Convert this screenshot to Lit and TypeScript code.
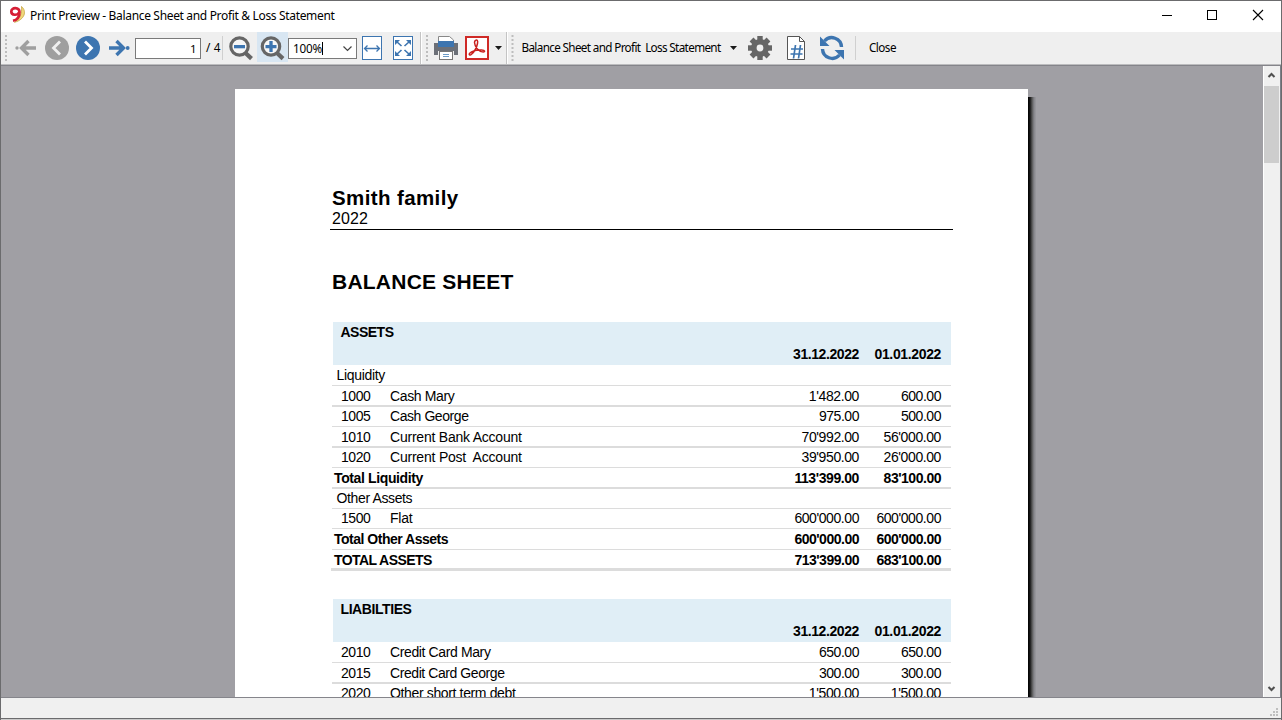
import { LitElement, html, svg, css } from "lit";
import { customElement, property } from "lit/decorators.js";

const SANS = '"Liberation Sans", Arial, sans-serif';
const UI = '"Noto Sans", "Open Sans", sans-serif';
const pen = document.createElement("canvas").getContext("2d")!;

/** Letter spacing that makes a text occupy the given advance width. */
function spacing(text: string, font: string, width: number): number {
  pen.font = font;
  return (width - pen.measureText(text).width) / text.length;
}

/** A single line of text that is set to a measured width. */
@customElement("set-text")
class SetText extends LitElement {
  @property() text = "";
  @property() face = "";
  @property({ type: Number }) w = 0;
  static styles = css`
    :host { display: block; white-space: pre; }
  `;
  render() {
    const s = this.w ? spacing(this.text, this.face, this.w) : 0;
    return html`<span style="font:${this.face};line-height:inherit;letter-spacing:${s.toFixed(3)}px">${this.text}</span>`;
  }
}

const REG = `14px ${SANS}`;
const BOLD = `bold 14px ${SANS}`;

type Row = {
  kind: "group" | "item" | "total";
  h: number;
  line: number;
  code?: string;
  name: string;
  w: number;
  a?: string;
  b?: string;
};

const assets: Row[] = [
  { kind: "group", h: 21, line: 1, name: "Liquidity", w: 48.5 },
  { kind: "item", h: 21, line: 2, code: "1000", name: "Cash Mary", w: 64.5, a: "1'482.00", b: "600.00" },
  { kind: "item", h: 20, line: 1, code: "1005", name: "Cash George", w: 78.5, a: "975.00", b: "500.00" },
  { kind: "item", h: 21, line: 2, code: "1010", name: "Current Bank Account", w: 132.5, a: "70'992.00", b: "56'000.00" },
  { kind: "item", h: 20, line: 1, code: "1020", name: "Current Post  Account", w: 132.5, a: "39'950.00", b: "26'000.00" },
  { kind: "total", h: 21, line: 2, name: "Total Liquidity", w: 89, a: "113'399.00", b: "83'100.00" },
  { kind: "group", h: 20, line: 1, name: "Other Assets", w: 76.5 },
  { kind: "item", h: 20, line: 1, code: "1500", name: "Flat", w: 22.5, a: "600'000.00", b: "600'000.00" },
  { kind: "total", h: 21, line: 1, name: "Total Other Assets", w: 114.5, a: "600'000.00", b: "600'000.00" },
  { kind: "total", h: 21, line: 3, name: "TOTAL ASSETS", w: 98.5, a: "713'399.00", b: "683'100.00" },
];

const liabilities: Row[] = [
  { kind: "item", h: 21, line: 1, code: "2010", name: "Credit Card Mary", w: 100.5, a: "650.00", b: "650.00" },
  { kind: "item", h: 21, line: 2, code: "2015", name: "Credit Card George", w: 114.5, a: "300.00", b: "300.00" },
  { kind: "item", h: 20, line: 1, code: "2020", name: "Other short term debt", w: 125.5, a: "1'500.00", b: "1'500.00" },
];

/** Width of an amount column entry; digits sit on a slightly tightened pitch. */
function amountWidth(t: string): number {
  const digits = t.replace(/\D/g, "").length;
  return digits * 7.2 + (t.includes("'") ? 3 : 0) + 4;
}

@customElement("report-table")
class ReportTable extends LitElement {
  @property() heading = "";
  @property({ type: Number }) hw = 0;
  @property({ attribute: false }) rows: Row[] = [];
  static styles = css`
    :host { display: block; width: 620px; line-height: 16px; color: #000; }
    .head { margin-left: 2px; height: 43px; box-sizing: border-box; background: #e0eef6; padding: 2px 0 3px 7.5px; display: flex; flex-direction: column; justify-content: space-between; }
    .dates, .row { display: grid; }
    .dates { grid-template-columns: 1fr 66px 82px 10px; justify-items: end; }
    .row { box-sizing: border-box; grid-template-columns: 58px 1fr 100px 82px 10px; align-items: end; border-bottom: 0 solid #dcdcdc; margin-left: 1px; }
    .l1 { border-bottom-width: 1px; padding-bottom: 2px; }
    .l2 { border-bottom-width: 2px; padding-bottom: 1px; }
    .l3 { border-bottom-width: 3px; margin-left: 0; padding-left: 1px; }
    .code { padding-left: 9px; }
    .group .name { grid-column: 1 / 3; padding-left: 4.5px; }
    .total .name { grid-column: 1 / 3; padding-left: 2px; }
    .num { justify-self: end; }
  `;
  render() {
    return html`
      <div class="head">
        <set-text text=${this.heading} face=${BOLD} w=${this.hw}></set-text>
        <div class="dates">
          <span></span>
          <set-text text="31.12.2022" face=${BOLD} w="66"></set-text>
          <set-text text="01.01.2022" face=${BOLD} w="66.5"></set-text>
        </div>
      </div>
      ${this.rows.map((r) => {
        const face = r.kind === "total" ? BOLD : REG;
        return html`<div class="row ${r.kind} l${r.line}" style="height:${r.h}px">
          ${r.code ? html`<set-text class="code" text=${r.code} face=${REG} w="29.4"></set-text>` : ""}
          <set-text class="name" text=${r.name} face=${face} w=${r.w}></set-text>
          ${r.a ? html`<set-text class="num" text=${r.a} face=${face} w=${amountWidth(r.a)}></set-text>
            <set-text class="num" text=${r.b!} face=${face} w=${amountWidth(r.b!)}></set-text>` : ""}
        </div>`;
      })}
    `;
  }
}

/** Toolbar cell; the drawing uses window x coordinates from x to x+w. */
const cell = (x: number, w: number, art: unknown) =>
  html`<svg class="cell" width=${w} height="32" viewBox="${x} 32 ${w} 32">${art}</svg>`;

const grip = (x: number) => svg`${[36, 40, 44, 48, 52, 56, 60].map(
  (y) => svg`<rect x=${x} y=${y - 1} width="2" height="2" fill="#bdbdbd"/>`)}`;
const bar = (x: number) => svg`<rect x=${x} y="36" width="1" height="24" fill="#d0d0d0"/>`;
const edge = (x: number) => svg`<rect x=${x} y="32" width="1" height="32" fill="#c4c4c4"/><rect x=${x + 1} y="32" width="1" height="32" fill="#fff"/>`;
const caret = (x: number) => svg`<path d="M${x} 46h7l-3.5 4z" fill="#1a1a1a"/>`;
const lens = (cx: number) => svg`<circle cx=${cx} cy="46.5" r="8.7" fill="#f7f7f7" stroke="#666" stroke-width="3.2"/><path d="M${cx + 6} 53l6 5.600" stroke="#666" stroke-width="4.200"/>`;
const teeth = [0, 45, 90, 135, 180, 225, 270, 315];

@customElement("app-root")
class AppRoot extends LitElement {
  static styles = css`
    :host { display: block; width: 1282px; height: 720px; overflow: hidden; background: #fff; color: #000; }
    .window { box-sizing: border-box; width: 1282px; height: 720px; border: 1px solid #6b6b6d; border-bottom: 0; display: flex; flex-direction: column; }
    .title { height: 31px; flex: none; display: flex; background: #fff; }
    .title set-text { line-height: 18px; padding-top: 5px; flex: 1; }
    .tools { height: 32px; flex: none; display: flex; background: #efefef; }
    .cell { display: block; flex: none; }
    .field { box-sizing: border-box; height: 21px; margin-top: 6px; border: 1px solid #7a7a7a; background: #fff; line-height: 18px; display: flex; flex: none; }
    .page-no { width: 66px; justify-content: flex-end; padding-right: 4px; }
    .zoom { width: 69px; padding-left: 4px; }
    .zoom svg { margin-left: auto; }
    .cursor { width: 1px; height: 13px; margin-top: 3px; background: #000; }
    .label { line-height: 20px; margin-top: 5px; flex: none; }
    .of { width: 20px; box-sizing: border-box; padding-left: 5px; }
    .name { width: 205px; box-sizing: border-box; padding-left: 2.5px; }
    .close { padding-left: 11px; }
    .rule { height: 2px; flex: none; box-sizing: border-box; border-top: 1px solid #bcbcbe; background: #84848a; }
    .view { height: 631px; flex: none; display: flex; background: #a09fa4; overflow: hidden; }
    .desk { flex: 1; box-sizing: border-box; padding: 23px 0 0 234px; display: flex; overflow: hidden; }
    .sheet { box-sizing: border-box; width: 793px; height: 900px; flex: none; background: #fff; padding: 97px 0 0 95px; }
    .shade { width: 8px; height: 900px; flex: none; margin-top: 8px; background: linear-gradient(90deg, #000 0, #161616 25%, #555 50%, #85858a 75%, #9b9a9f 100%); }
    .family { line-height: 24px; padding-left: 2px; }
    .year { line-height: 18px; padding-left: 2px; margin-top: -2px; }
    .under { width: 623px; height: 1px; background: #000; margin-top: 1px; }
    .doc { line-height: 24px; padding: 40px 0 0 2px; }
    .one { margin: 26px 0 0 1px; }
    .two { margin: 28px 0 0 1px; }
    .scroll { width: 16px; background: #f0f0f0; border-left: 1px solid #fff; border-right: 1px solid #7d8089; flex: none; display: flex; flex-direction: column; }
    .thumb { width: 15px; height: 77px; background: #cdcdcd; }
    .room { flex: 1; }
    .status { height: 20px; flex: none; border-top: 1px solid #85858b; background: #f0f0f0; display: flex; justify-content: flex-end; }
    .foot { height: 1px; flex: none; background: #6b6b6d; }
    .below { height: 1px; flex: none; background: #c9c9c9; }
  `;

  render() {
    const ui = (px: number) => `${px}px ${UI}`;
    return html`
      <div class="window">
        <div class="title">
          <svg class="cell" width="29" height="31" viewBox="1 1 29 31">
            <path d="M21.500 6.500c5.500 4.500 3.500 13-7 15.800 5-3.500 8-9 7-15.800z" fill="#f0d87a" stroke="#c9a94b" stroke-width=".9"/>
            <path d="M19 12.500c-1.500 3-7.700 3.300-7.700-1 0-4.500 8-4.600 8.200.600.100 4.500-2.500 7.800-6.500 8.700" fill="none" stroke="#d51f35" stroke-width="2.700"/>
          </svg>
          <set-text text="Print Preview - Balance Sheet and Profit & Loss Statement" face=${ui(12)} w="304.500"></set-text>
          <svg class="cell" width="131" height="31" viewBox="1150 1 131 31" shape-rendering="crispEdges">
            <path d="M1162 15.500h10" stroke="#000"/>
            <rect x="1207.500" y="10.500" width="9" height="9" fill="none" stroke="#000"/>
            <path d="M1253 10l10 10M1263 10l-10 10" stroke="#000" stroke-width="1.100" shape-rendering="auto"/>
          </svg>
        </div>
        <div class="tools">
          ${cell(1, 134, svg`${grip(5)}
            <circle cx="17" cy="48" r="1.700" fill="#9f9f9f"/>
            <path d="M36 48H22M28.500 41l-7 7 7 7" fill="none" stroke="#9f9f9f" stroke-width="3.400"/>
            <circle cx="57" cy="48" r="12" fill="#9f9f9f"/>
            <path d="M60 41.500L53.500 48l6.500 6.500" fill="none" stroke="#efefef" stroke-width="2.800"/>
            <circle cx="88" cy="48" r="12" fill="#3d75b0"/>
            <path d="M85 41.500L91.500 48 85 54.500" fill="none" stroke="#fff" stroke-width="2.800"/>
            <path d="M109 48h14M116.500 41l7 7-7 7" fill="none" stroke="#3d75b0" stroke-width="3.400"/>
            <circle cx="127.700" cy="48" r="1.900" fill="#3d75b0"/>`)}
          <div class="field page-no"><set-text text="1" face=${ui(11.5)} w="6"></set-text></div>
          <set-text class="label of" text="/ 4" face=${ui(11.7)} w="14.500"></set-text>
          ${cell(221, 67, svg`${bar(222)}
            ${lens(239.5)}<rect x="234" y="45" width="11" height="3.300" fill="#3d75b0"/>
            <rect x="257" y="32" width="31" height="30" fill="#d8e6f2"/>
            ${lens(271)}<path d="M265.500 46.600h11M271 41.100v11" stroke="#3d75b0" stroke-width="3.300"/>`)}
          <div class="field zoom">
            <set-text text="100%" face=${ui(11.7)} w="29"></set-text><div class="cursor"></div>
            <svg width="17" height="19" viewBox="339 39 17 19"><path d="M343.500 46.500l4 4 4-4" fill="none" stroke="#444" stroke-width="1.200"/></svg>
          </div>
          ${cell(357, 162, svg`
            <rect x="362.500" y="36.500" width="19" height="23" fill="#fff" stroke="#3d75b0"/>
            <path d="M365 48.500h14M367.500 45.500l-3 3 3 3M376.500 45.500l3 3-3 3" fill="none" stroke="#3d75b0" stroke-width="1.300"/>
            <rect x="393.500" y="36.500" width="19" height="23" fill="#fff" stroke="#3d75b0"/>
            <path d="M395 45v-5h5zM406 40h5v5zM411 51v5h-5zM400 56h-5v-5z" fill="#3d75b0"/>
            <path d="M396.500 41.500l5 4.500M409.500 41.500l-5 4.500M409.500 54.500l-5-4.500M396.500 54.500l5-4.500" stroke="#3d75b0" stroke-width="1.600"/>
            ${edge(420)}${grip(426)}
            <path d="M434 43h24v12h-4v-4h-16v4h-4z" fill="#6c7078"/>
            <path d="M438.500 42v-5.500h11l4 3.500v2z" fill="#fff" stroke="#888"/>
            <rect x="438" y="41" width="16" height="6" fill="#3d75b0"/>
            <rect x="439.500" y="51.500" width="13" height="8" fill="#fff" stroke="#777"/>
            <path d="M443 54.500h6M443 56.500h6" stroke="#6b9ac6"/>
            <rect x="466" y="37" width="22" height="22" fill="#fff" stroke="#cf2a27" stroke-width="2"/>
            <path d="M475.500 40.500c1.500-1.300 2.600 0 2 3-.800 4-3.500 8.500-6 10.800-1.500 1.400-3 .400-1.800-1 2.500-2.500 8-3.500 12-3.300 3.500.200 3.600 2 1.500 2-4 0-8.500-5-8.700-9.500 0-1 .300-1.600 1-2z" fill="none" stroke="#c9211e" stroke-width="1.500"/>
            ${caret(495)}${edge(506)}${grip(511.5)}`)}
          <set-text class="label name" text="Balance Sheet and Profit  Loss Statement" face=${ui(11.7)} w="199"></set-text>
          ${cell(724, 134, svg`${caret(730)}
            ${teeth.map((a) => svg`<rect x="757.300" y="36" width="5.400" height="6" fill="#666" transform="rotate(${a} 760 48)"/>`)}
            <circle cx="760" cy="48" r="6.200" fill="none" stroke="#666" stroke-width="5.600"/>
            <path d="M787.500 36.500h12l5 5v18h-17z" fill="#fff" stroke="#555"/>
            <path d="M799.500 36.500v5h5" fill="none" stroke="#555"/>
            <path d="M791 49h12M790.500 54h12M795.500 45l-2 13.500M800.500 45l-2 13.500" fill="none" stroke="#3d75b0" stroke-width="1.700"/>
            <path d="M841.500 47a9.700 9.700 0 0 0-17-6M822.500 49a9.700 9.700 0 0 0 17 6" fill="none" stroke="#3d75b0" stroke-width="3.400"/>
            <path d="M820 36.500v9.500h9.500zM844 59.500V50h-9.500z" fill="#3d75b0"/>
            ${bar(855)}`)}
          <set-text class="label close" text="Close" face=${ui(11.7)} w="27"></set-text>
        </div>
        <div class="rule"></div>
        <div class="view">
          <div class="desk">
            <div class="sheet">
              <set-text class="family" text="Smith family" face=${`bold 20.5px ${SANS}`} w="126.500"></set-text>
              <set-text class="year" text="2022" face=${`16px ${SANS}`} w="36"></set-text>
              <div class="under"></div>
              <set-text class="doc" text="BALANCE SHEET" face=${`bold 21px ${SANS}`} w="181.500"></set-text>
              <report-table class="one" heading="ASSETS" hw="53" .rows=${assets}></report-table>
              <report-table class="two" heading="LIABILTIES" hw="71" .rows=${liabilities}></report-table>
            </div>
            <div class="shade"></div>
          </div>
          <div class="scroll">
            <svg class="cell" width="16" height="20" viewBox="1264 66 16 20"><path d="M1268.500 77l3-3 3 3" fill="none" stroke="#505050" stroke-width="2"/></svg>
            <div class="thumb"></div>
            <div class="room"></div>
            <svg class="cell" width="16" height="18" viewBox="1264 679 16 18"><path d="M1268.500 687l3 3 3-3" fill="none" stroke="#505050" stroke-width="2"/></svg>
          </div>
        </div>
        <div class="status">
          <svg class="cell" width="16" height="20" viewBox="1265 698 16 20" fill="#bfbfbf">
            <path d="M1270 714h2v2h-2zM1273 714h2v2h-2zM1276 714h2v2h-2zM1273 711h2v2h-2zM1276 711h2v2h-2zM1276 708h2v2h-2z"/>
          </svg>
        </div>
        <div class="foot"></div>
        <div class="below"></div>
      </div>
    `;
  }
}
